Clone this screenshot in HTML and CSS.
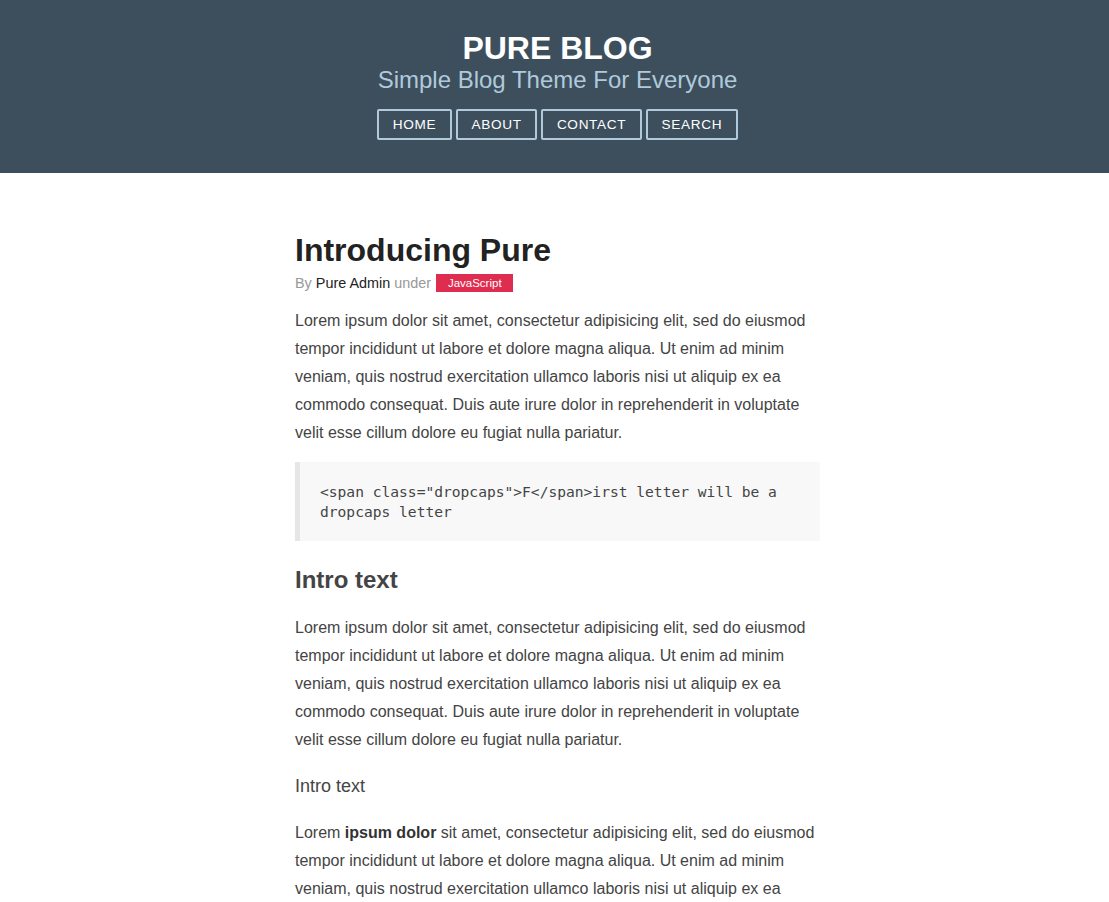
FILE: index.html
```html
<!DOCTYPE html>
<html lang="en">
<head>
<meta charset="utf-8">
<title>Pure Blog</title>
<link rel="stylesheet" href="styles.css">
</head>
<body>
<header class="header">
  <div class="header-inner">
    <h1 class="brand-title">PURE BLOG</h1>
    <h2 class="brand-tagline">Simple Blog Theme For Everyone</h2>
    <nav class="nav">
      <a class="nav-btn" href="#">Home</a>
      <a class="nav-btn" href="#">About</a>
      <a class="nav-btn" href="#">Contact</a>
      <a class="nav-btn" href="#">Search</a>
    </nav>
  </div>
</header>
<main class="main">
  <article class="post">
    <h1 class="post-title">Introducing Pure</h1>
    <p class="post-meta">By <a class="post-author" href="#">Pure Admin</a> under <a class="post-category" href="#">JavaScript</a></p>
    <p class="post-text">Lorem ipsum dolor sit amet, consectetur adipisicing elit, sed do eiusmod tempor incididunt ut labore et dolore magna aliqua. Ut enim ad minim veniam, quis nostrud exercitation ullamco laboris nisi ut aliquip ex ea commodo consequat. Duis aute irure dolor in reprehenderit in voluptate velit esse cillum dolore eu fugiat nulla pariatur.</p>
    <pre class="code-block"><code>&lt;span class="dropcaps"&gt;F&lt;/span&gt;irst letter will be a dropcaps letter</code></pre>
    <h2 class="post-h2">Intro text</h2>
    <p class="post-text after-h2">Lorem ipsum dolor sit amet, consectetur adipisicing elit, sed do eiusmod tempor incididunt ut labore et dolore magna aliqua. Ut enim ad minim veniam, quis nostrud exercitation ullamco laboris nisi ut aliquip ex ea commodo consequat. Duis aute irure dolor in reprehenderit in voluptate velit esse cillum dolore eu fugiat nulla pariatur.</p>
    <h3 class="post-h3">Intro text</h3>
    <p class="post-text after-h3">Lorem <strong>ipsum dolor</strong> sit amet, consectetur adipisicing elit, sed do eiusmod tempor incididunt ut labore et dolore magna aliqua. Ut enim ad minim veniam, quis nostrud exercitation ullamco laboris nisi ut aliquip ex ea commodo consequat. Duis aute irure dolor in reprehenderit in voluptate velit esse cillum dolore eu fugiat nulla pariatur.</p>
  </article>
</main>
</body>
</html>
```
FILE: styles.css
```css
* { box-sizing: border-box; }
html, body { margin: 0; padding: 0; }
body {
  font-family: "Liberation Sans", Arial, sans-serif;
  color: #444;
  background: #fff;
}
.header {
  background: rgb(61, 79, 93);
  padding: 30px 0 33px;
}
.header-inner {
  padding-left: 6px;
  display: flex;
  flex-direction: column;
  align-items: center;
}
.brand-title {
  margin: 0;
  font-size: 32px;
  line-height: 36px;
  font-weight: bold;
  color: #fff;
}
.brand-tagline {
  margin: 0;
  font-size: 24px;
  line-height: 28px;
  font-weight: normal;
  color: rgb(176, 202, 219);
}
.nav {
  display: flex;
  gap: 4px;
  margin-top: 15px;
}
.nav-btn {
  display: block;
  border: 2px solid rgb(176, 202, 219);
  border-radius: 2px;
  color: #fff;
  text-decoration: none;
  text-transform: uppercase;
  font-size: 13.6px;
  letter-spacing: 0.05em;
  line-height: 16px;
  padding: 5.5px 13.6px;
}
.main {
  padding: 60px 0 40px 6px;
}
.post {
  width: 525px;
  margin: 0 auto;
}
.post-title {
  margin: 0;
  font-size: 32px;
  line-height: 34px;
  font-weight: bold;
  color: #222;
}
.post-meta {
  margin: 6px 0 0;
  font-size: 14.4px;
  line-height: 20px;
  color: #999;
}
.post-author {
  color: #222;
  text-decoration: none;
}
.post-category {
  display: inline-block;
  margin: 0 1.4px;
  padding: 3px 11.5px;
  font-size: 11.5px;
  line-height: 12px;
  color: #fff;
  background: #df2d4f;
  text-decoration: none;
  vertical-align: 1px;
}
.post-text {
  margin: 14px 0 0;
  font-size: 16px;
  line-height: 28px;
  color: #444;
}
.post-text strong { color: #333; }
.code-block {
  margin: 15px 0 0;
  background: #f8f8f8;
  border-left: 5px solid #e6e6e6;
  padding: 20px;
  font-family: "DejaVu Sans Mono", "Liberation Mono", monospace;
  font-size: 14.6px;
  line-height: 19.5px;
  color: #444;
  white-space: pre-wrap;
}
.post-h2 {
  margin: 24px 0 0;
  font-size: 24px;
  line-height: 30px;
  font-weight: bold;
  color: #444;
}
.after-h2 { margin-top: 19px; }
.post-h3 {
  margin: 20px 0 0;
  font-size: 18px;
  line-height: 24px;
  font-weight: normal;
  color: #444;
}
.after-h3 { margin-top: 21px; }
```
